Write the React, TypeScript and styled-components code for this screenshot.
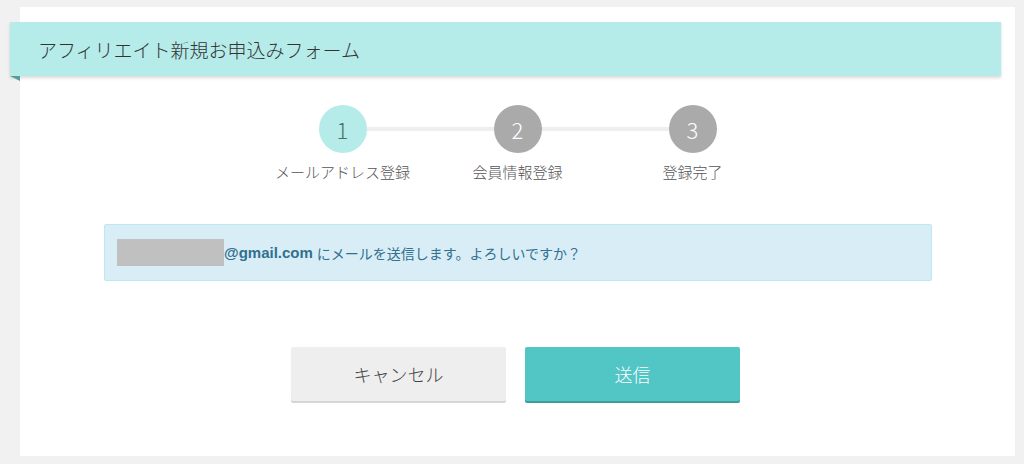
import * as React from "react";
import styled, { createGlobalStyle } from "styled-components";

const GlobalStyle = createGlobalStyle`
    html, body {
        margin: 0;
        padding: 0;
        background: #f1f1f1;
        font-family: "Noto Sans CJK JP", "Noto Sans", sans-serif;
    }
`

const Page = styled.div`
    padding: 7px 9px 8px 20px;
    box-sizing: border-box;
    width: 1024px;
    height: 464px;
`

const Card = styled.div`
    background: #ffffff;
    height: 449px;
    box-sizing: border-box;
    padding-top: 15px;
    display: flex;
    flex-direction: column;
`

const Ribbon = styled.div`
    position: relative;
    margin: 0 14px 0 -10px;
    height: 54px;
    background: #b5ebe9;
    box-shadow: 0 2px 3px rgba(0, 0, 0, 0.15);
    display: flex;
    align-items: center;
    padding-left: 28px;
    font-size: 19px;
    font-weight: 300;
    color: #333;

    &::after {
        content: "";
        position: absolute;
        left: 0;
        bottom: -5px;
        border-top: 5px solid #5a9c9a;
        border-left: 10px solid transparent;
    }
`

const Stepper = styled.div`
    display: flex;
    justify-content: center;
    margin-top: 29px;
`

const Step = styled.div<{ $first?: boolean }>`
    position: relative;
    width: 175px;
    display: flex;
    flex-direction: column;
    align-items: center;

    &::before {
        content: "";
        display: ${p => p.$first ? "none" : "block"};
        position: absolute;
        top: 22px;
        right: 50%;
        width: 175px;
        height: 4px;
        background: #eeeeee;
    }
`

const Circle = styled.div<{ $active?: boolean }>`
    position: relative;
    z-index: 1;
    width: 48px;
    height: 48px;
    border-radius: 50%;
    background: ${p => p.$active ? "#b5ebe9" : "#aaaaaa"};
    color: ${p => p.$active ? "#4a6e6e" : "#ffffff"};
    font-size: 22px;
    font-weight: 300;
    display: flex;
    align-items: center;
    justify-content: center;
`

const StepLabel = styled.div`
    margin-top: 8px;
    font-size: 15px;
    font-weight: 300;
    color: #555;
    white-space: nowrap;
`

const Alert = styled.div`
    margin: 42px 83px 0 84px;
    height: 57px;
    box-sizing: border-box;
    background: #d9edf7;
    border: 1px solid #bce8f1;
    border-radius: 2px;
    display: flex;
    align-items: center;
    padding-left: 12px;
    font-size: 14px;
    color: #31708f;
`

const Redacted = styled.span`
    display: inline-block;
    width: 107px;
    height: 27px;
    background: #c0c0c0;
`

const Email = styled.b`
    font-family: "Liberation Sans", "Noto Sans", sans-serif;
    font-weight: bold;
    font-size: 15px;
    margin-right: 4px;
`

const Buttons = styled.div`
    display: flex;
    justify-content: center;
    gap: 19px;
    margin-top: 66px;
    padding-right: 4px;
`

const Button = styled.button<{ $primary?: boolean }>`
    width: 215px;
    height: 54px;
    border: none;
    border-radius: 2px;
    font-family: inherit;
    font-size: 18px;
    font-weight: 300;
    background: ${p => p.$primary ? "#52c5c5" : "#eeeeee"};
    color: ${p => p.$primary ? "#ffffff" : "#444"};
    box-shadow: 0 2px 0 ${p => p.$primary ? "#3a9e9e" : "#d6d6d6"};
    cursor: pointer;
`

const steps = ["メールアドレス登録", "会員情報登録", "登録完了"]

export default function App() {
    return (
        <Page>
            <GlobalStyle />
            <Card>
                <Ribbon>アフィリエイト新規お申込みフォーム</Ribbon>
                <Stepper>
                    {steps.map((label, index) => (
                        <Step key={label} $first={index === 0}>
                            <Circle $active={index === 0}>{index + 1}</Circle>
                            <StepLabel>{label}</StepLabel>
                        </Step>
                    ))}
                </Stepper>
                <Alert>
                    <Redacted />
                    <Email>@gmail.com</Email>
                    にメールを送信します。よろしいですか？
                </Alert>
                <Buttons>
                    <Button>キャンセル</Button>
                    <Button $primary>送信</Button>
                </Buttons>
            </Card>
        </Page>
    )
}
